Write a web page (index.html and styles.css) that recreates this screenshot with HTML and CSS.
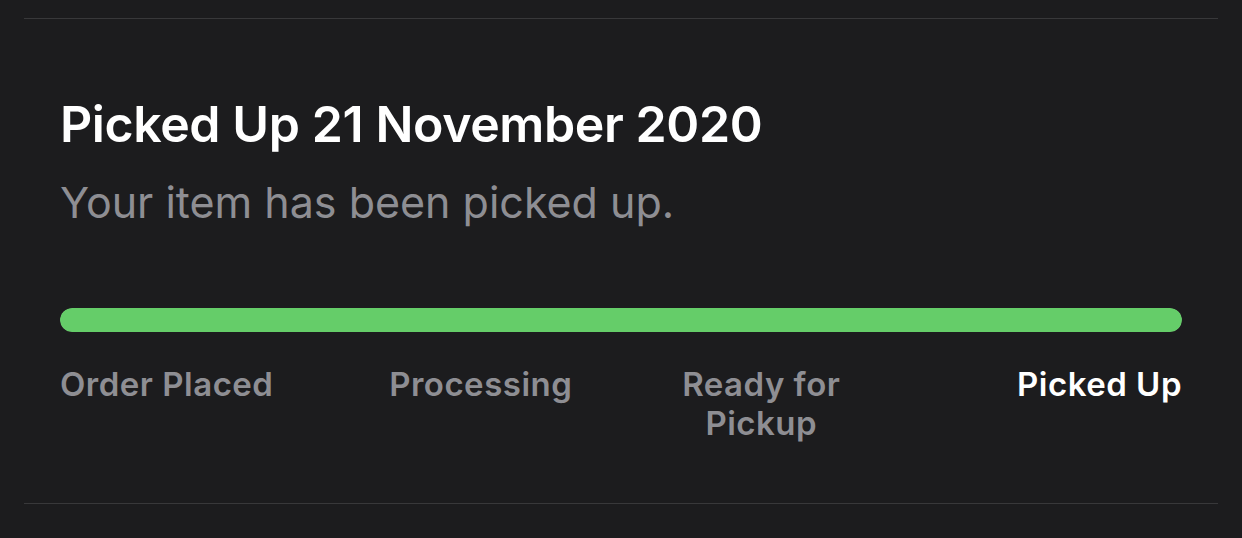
FILE: index.html
```html
<!DOCTYPE html>
<html lang="en">
<head>
    <meta charset="UTF-8">
    <meta name="viewport" content="width=device-width, initial-scale=1.0">
    <title>Order Status</title>
    <link rel="stylesheet" href="styles.css">
</head>
<body>
    <div class="status-card">
        <h1 class="status-title">Picked Up 21 November 2020</h1>
        <p class="status-text">Your item has been picked up.</p>

        <div class="progress">
            <div class="progress-fill" style="width: 100%"></div>
        </div>

        <div class="steps">
            <div class="step first">Order Placed</div>
            <div class="step">Processing</div>
            <div class="step">Ready for<br>Pickup</div>
            <div class="step last current">Picked Up</div>
        </div>
    </div>
</body>
</html>
```

FILE: styles.css
```css
body {
    margin: 0;
    padding-top: 18px;
    background: #1c1c1e;
    font-family: Inter, 'Noto Sans', sans-serif;
    color: #fff;
}
.status-card {
    margin: 0 24px;
    padding: 75px 36px 60px;
    border-top: 1px solid #38383a;
    border-bottom: 1px solid #38383a;
}
.status-title {
    margin: 0;
    font-size: 50px;
    line-height: 60px;
    font-weight: 600;
    letter-spacing: -0.4px;
}
.status-text {
    margin: 22px 0 0 0;
    font-size: 43px;
    line-height: 52px;
    color: #8e8e93;
}
.progress {
    margin-top: 80px;
    height: 24px;
    border-radius: 12px;
    background: #3a3a3c;
    overflow: hidden;
}
.progress-fill {
    height: 100%;
    background: #65cd69;
    border-radius: 12px;
}
.steps {
    display: grid;
    grid-template-columns: repeat(4, 1fr);
    margin-top: 33px;
}
.step {
    font-size: 33px;
    line-height: 39px;
    font-weight: 600;
    letter-spacing: 0.5px;
    color: #8e8e93;
    text-align: center;
}
.step.first { text-align: left; }
.step.last { text-align: right; }
.step.current { color: #fff; }
```
